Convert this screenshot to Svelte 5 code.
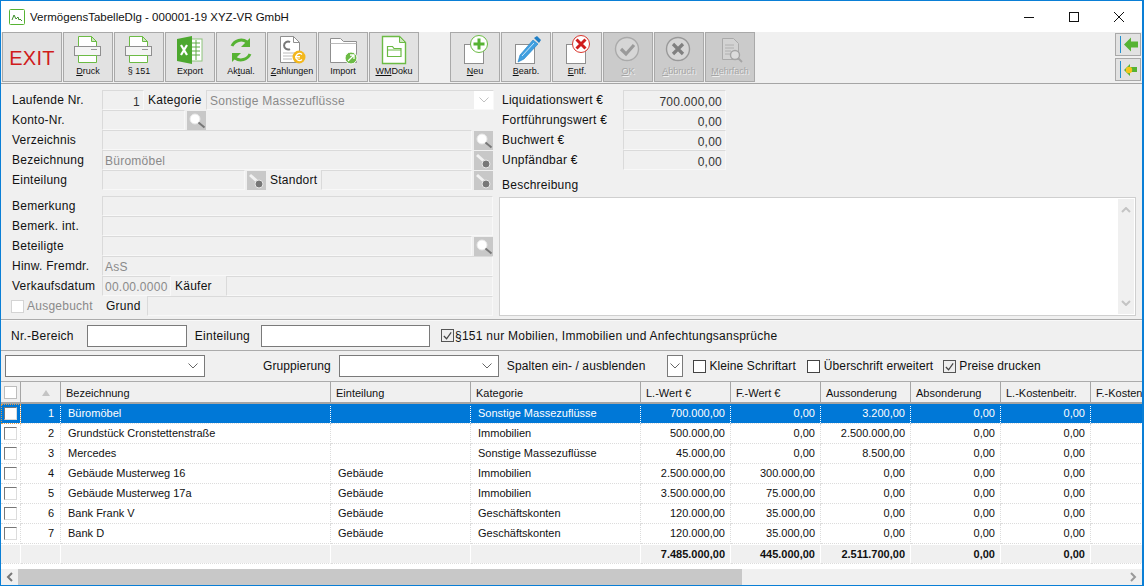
<script>
const leftTools=[{k:"print",u:"D",t:"ruck"},{k:"print",u:"",t:"§ 151"},{k:"excel",u:"",t:"Export"},{k:"sync",u:"",t:"Aktual.",mid:["Ak","t","ual."]},{k:"pay",u:"Z",t:"ahlungen"},{k:"imp",u:"",t:"Import"},{k:"wm",u:"WM",t:"Doku"}];
const rightTools=[{k:"neu",u:"N",t:"eu"},{k:"edit",u:"B",t:"earb."},{k:"del",u:"E",t:"ntf."},{k:"ok",u:"O",t:"K",off:true},{k:"abort",u:"A",t:"bbruch",off:true},{k:"multi",u:"M",t:"ehrfach",off:true}];
const cols=["Bezeichnung","Einteilung","Kategorie","L.-Wert €","F.-Wert €","Aussonderung","Absonderung","L.-Kostenbeitr.","F.-Kostenbeitr."];
const rows=[
["Büromöbel","","Sonstige Massezuflüsse","700.000,00","0,00","3.200,00","0,00","0,00"],
["Grundstück Cronstettenstraße","","Immobilien","500.000,00","0,00","2.500.000,00","0,00","0,00"],
["Mercedes","","Sonstige Massezuflüsse","45.000,00","0,00","8.500,00","0,00","0,00"],
["Gebäude Musterweg 16","Gebäude","Immobilien","2.500.000,00","300.000,00","0,00","0,00","0,00"],
["Gebäude Musterweg 17a","Gebäude","Immobilien","3.500.000,00","75.000,00","0,00","0,00","0,00"],
["Bank Frank V","Gebäude","Geschäftskonten","120.000,00","35.000,00","0,00","0,00","0,00"],
["Bank D","Gebäude","Geschäftskonten","120.000,00","35.000,00","0,00","0,00","0,00"]];
const totals=["7.485.000,00","445.000,00","2.511.700,00","0,00","0,00"];
</script>

{#snippet icon(k)}
<svg class="ico" viewBox="0 0 32 30" width="32" height="30" fill="none">
{#if k==="print"}
	<path d="M6.500 1.500h13l5 5v8h-18z" fill="#fff" stroke="#6cbb45"/><path d="M19.500 1.500v5h5z" fill="#cfe8bf" stroke="#6cbb45"/>
	<rect x="2.500" y="11.500" width="26" height="9" fill="#f4f4f4" stroke="#8f8f8f"/><path d="M19 14.500h6" stroke="#999"/>
	<path d="M6.500 20.500h18v7h-18z" fill="#fff" stroke="#6cbb45"/>
{:else if k==="excel"}
	<rect x="15" y="4" width="13" height="22" fill="#fff" stroke="#8cc47a"/><path d="M18 8h8M18 12h8M18 16h8M18 20h8M22 5v20" stroke="#5eaa45"/>
	<path d="M3 4l15-3v28l-15-3z" fill="#4da82f"/><path d="M7 10l6 10M13 10l-6 10" stroke="#fff" stroke-width="2.200"/>
{:else if k==="sync"}
	<path d="M7 11a10 10 0 0 1 15-4" stroke="#56b333" stroke-width="3"/><path d="M25 3v9h-9z" fill="#56b333"/>
	<path d="M25 19a10 10 0 0 1-15 4" stroke="#56b333" stroke-width="3"/><path d="M7 27v-9h9z" fill="#56b333"/>
{:else if k==="pay"}
	<path d="M4.500 1.500h13l6 6v20h-19z" fill="#fff" stroke="#8f8f8f"/><path d="M17.500 1.500v6h6" stroke="#8f8f8f"/>
	<path d="M14 7a4 4 0 1 0 0 7" stroke="#777" stroke-width="2"/><path d="M7 18h12M7 21h10M7 24h9" stroke="#bbb"/>
	<circle cx="23" cy="22" r="6.500" fill="#f3b71c"/><path d="M26 19.500a3.500 3.500 0 1 0 0 5M19 21.500h5M19 23h5" stroke="#fff" stroke-width="1.200"/>
{:else if k==="imp"}
	<path d="M3.500 27.500v-24h10l3 3h13v21z" fill="#fff" stroke="#8f8f8f"/><path d="M3.500 8.500h26" stroke="#bbb"/>
	<circle cx="24" cy="23" r="6" fill="#6cbb45" stroke="#fff"/><path d="M21 26l6-6M23 20h4v4" stroke="#fff" stroke-width="1.300"/>
{:else if k==="wm"}
	<path d="M4.500 1.500h17l6 6v21h-23z" fill="#fff" stroke="#6cbb45" stroke-width="1.400"/><path d="M21.500 1.500v6h6z" fill="#cfe8bf" stroke="#6cbb45"/>
	<path d="M9.500 21.500v-10h5l1.500 2h7v8z" stroke="#6cbb45" stroke-width="1.200"/><path d="M9.500 15h13.500" stroke="#6cbb45"/>
{:else if k==="neu"}
	<rect x="5.500" y="9.500" width="19" height="19" fill="#fff" stroke="#8f8f8f"/><circle cx="20" cy="9" r="8.500" fill="#fff" stroke="#6cbb45"/><path d="M20 3.500v11M14.500 9h11" stroke="#56b333" stroke-width="3"/>
{:else if k==="edit"}
	<rect x="5.500" y="9.500" width="19" height="19" fill="#fff" stroke="#8f8f8f"/><path d="M8 27l2-7L23 5l5 4-14 15z" fill="#3f9fe0" stroke="#1f7fc5" stroke-width=".6"/><path d="M12 21L24 8" stroke="#cfe8f8"/><path d="M24 3l3-2 4 4-2 3z" fill="#1f7fc5"/>
{:else if k==="del"}
	<rect x="5.500" y="9.500" width="19" height="19" fill="#fff" stroke="#8f8f8f"/><circle cx="20" cy="9" r="8.500" fill="#fff" stroke="#d9342b"/><path d="M15.500 4.500l9 9M24.500 4.500l-9 9" stroke="#d01c1c" stroke-width="3"/>
{:else if k==="ok"}
	<circle cx="15" cy="14" r="11.500" fill="#d6d6d6" stroke="#aaa" stroke-width="1.400"/><path d="M9 14l5 5 8-9" stroke="#9a9a9a" stroke-width="3.200"/>
{:else if k==="abort"}
	<circle cx="15" cy="14" r="11.500" fill="#d6d6d6" stroke="#999" stroke-width="1.400"/><path d="M10 9l10 10M20 9l-10 10" stroke="#808080" stroke-width="3.200"/>
{:else if k==="multi"}
	<path d="M8.500 3.500h11l5 5v16h-16z" fill="#d3d3d3" stroke="#aaa"/><path d="M11 10h9M11 13h9M11 16h6M11 19h6" stroke="#b0b0b0"/>
	<circle cx="21" cy="20" r="4.500" fill="#dcdcdc" stroke="#a5a5a5" stroke-width="1.400"/><path d="M24 23l4 4" stroke="#a5a5a5" stroke-width="1.800"/>
{/if}
</svg>
{/snippet}

{#snippet tool(b)}
<div class="tool" class:off={b.off}>
	{@render icon(b.k)}
	<span class="tlabel">{#if b.mid}{b.mid[0]}<u>{b.mid[1]}</u>{b.mid[2]}{:else}<u>{b.u}</u>{b.t}{/if}</span>
</div>
{/snippet}

{#snippet search()}
<span class="sqbtn"><svg viewBox="0 0 19 19" width="19" height="19" fill="none"><circle cx="8" cy="8" r="5" fill="#fff" stroke="#e8e8e8"/><path d="M11.500 11.500l6 5" stroke="#777" stroke-width="2"/></svg></span>
{/snippet}

{#snippet keyb()}
<span class="sqbtn"><svg viewBox="0 0 19 19" width="19" height="19" fill="none"><path d="M3 4l9 8" stroke="#f2f2f2" stroke-width="3"/><circle cx="12" cy="13" r="4" fill="#777" stroke="#e8e8e8"/></svg></span>
{/snippet}

{#snippet chev()}
<svg viewBox="0 0 10 6" width="10" height="6" fill="none"><path d="M.5 .5L5 5 9.500 .5" stroke="#666"/></svg>
{/snippet}

<div class="win">
	<header class="title">
		<svg class="appico" viewBox="0 0 16 16" width="16" height="16" fill="none"><rect x=".5" y=".5" width="15" height="15" rx="1" fill="#fff" stroke="#56b333"/><path d="M3 11l2-5 2 4 2-2 1 3 1-1 2 2" stroke="#3e8e2a"/></svg>
		<span class="ttext">VermögensTabelleDlg - 000001-19 XYZ-VR GmbH</span>
		<div class="wbtns">
			<svg viewBox="0 0 10 10" width="10" height="10"><path d="M0 5.500h10" stroke="#111"/></svg>
			<svg viewBox="0 0 10 10" width="10" height="10"><rect x=".5" y=".5" width="9" height="9" fill="none" stroke="#111"/></svg>
			<svg viewBox="0 0 10 10" width="10" height="10"><path d="M0 0l10 10M10 0L0 10" stroke="#111"/></svg>
		</div>
	</header>

	<div class="toolbar">
		<div class="tool exit">EXIT</div>
		{#each leftTools as b}{@render tool(b)}{/each}
		<div class="tgap"></div>
		{#each rightTools as b}{@render tool(b)}{/each}
		<div class="nav">
			<div class="navbtn"><svg viewBox="0 0 24 20" width="24" height="20" fill="none"><path d="M4.500 1v17" stroke="#1f8fd0"/><path d="M8 9.500l7-7v4h7v6h-7v4z" fill="#56b333"/></svg></div>
			<div class="navbtn"><svg viewBox="0 0 24 20" width="24" height="20" fill="none"><path d="M4.500 1v17" stroke="#1f8fd0"/><path d="M8 10l6-6v3h7v5h-7v4z" fill="#56b333"/><circle cx="13" cy="10" r="3.200" fill="#f3c51c"/></svg></div>
		</div>
	</div>

	<section class="form">
		<div class="col-l">
			<div class="row"><label>Laufende Nr.</label><span class="fld w-nr num">1</span><span class="lbl kat">Kategorie</span><span class="fld sel"><span class="seltext">Sonstige Massezuflüsse</span><span class="selarrow">{@render chev()}</span></span></div>
			<div class="row"><label>Konto-Nr.</label><span class="fld w-konto"></span>{@render search()}</div>
			<div class="row"><label>Verzeichnis</label><span class="fld grow"></span>{@render search()}</div>
			<div class="row"><label>Bezeichnung</label><span class="fld grow">Büromöbel</span>{@render keyb()}</div>
			<div class="row"><label>Einteilung</label><span class="fld w-eint"></span>{@render keyb()}<span class="lbl stand">Standort</span><span class="fld grow"></span>{@render keyb()}</div>
			<div class="row spaced"><label>Bemerkung</label><span class="fld grow"></span></div>
			<div class="row"><label>Bemerk. int.</label><span class="fld grow"></span></div>
			<div class="row"><label>Beteiligte</label><span class="fld grow"></span>{@render search()}</div>
			<div class="row"><label>Hinw. Fremdr.</label><span class="fld grow">AsS</span></div>
			<div class="row"><label>Verkaufsdatum</label><span class="fld w-date">00.00.0000</span><span class="lbl kaeufer">Käufer</span><span class="fld grow"></span></div>
			<div class="row"><span class="cb cb-form"></span><span class="lbl ausg">Ausgebucht</span><span class="lbl grund">Grund</span><span class="fld grow"></span></div>
		</div>
		<div class="col-r">
			<div class="vals">
				<div class="row"><label class="rl">Liquidationswert €</label><span class="fld w-val num">700.000,00</span></div>
				<div class="row"><label class="rl">Fortführungswert €</label><span class="fld w-val num">0,00</span></div>
				<div class="row"><label class="rl">Buchwert €</label><span class="fld w-val num">0,00</span></div>
				<div class="row"><label class="rl">Unpfändbar €</label><span class="fld w-val num">0,00</span></div>
			</div>
			<div class="beschr">Beschreibung</div>
			<div class="memo">
				<div class="vscroll">
					<svg viewBox="0 0 10 6" width="10" height="6" fill="none"><path d="M1 5l4-4 4 4" stroke="#c4c4c4" stroke-width="2"/></svg>
					<svg viewBox="0 0 10 6" width="10" height="6" fill="none"><path d="M1 1l4 4 4-4" stroke="#c4c4c4" stroke-width="2"/></svg>
				</div>
			</div>
		</div>
	</section>

	<div class="filter f1">
		<span>Nr.-Bereich</span><span class="inp w-a"></span>
		<span class="m-e">Einteilung</span><span class="inp w-b"></span>
		<span class="cb checked m-c"><svg viewBox="0 0 12 12" width="12" height="12" fill="none"><path d="M2 6l3 3 5-7" stroke="#444" stroke-width="1.300"/></svg></span>
		<span class="m-p">§151 nur Mobilien, Immobilien und Anfechtungsansprüche</span>
	</div>

	<div class="filter f2">
		<span class="inp combo w-c">{@render chev()}</span>
		<span class="m-g">Gruppierung</span>
		<span class="inp combo w-d">{@render chev()}</span>
		<span class="m-s">Spalten ein- / ausblenden</span>
		<span class="inp combo w-x">{@render chev()}</span>
		<span class="cb blk m-k"></span><span class="m-l">Kleine Schriftart</span>
		<span class="cb blk m-u"></span><span class="m-l2">Überschrift erweitert</span>
		<span class="cb checked m-r"><svg viewBox="0 0 12 12" width="12" height="12" fill="none"><path d="M2 6l3 3 5-7" stroke="#444" stroke-width="1.300"/></svg></span><span class="m-l">Preise drucken</span>
	</div>

	<div class="grid">
		<table>
			<colgroup><col class="c0"><col class="c1"><col class="c2"><col class="c3"><col class="c4">{#each [0,1,2,3,4,5] as c}<col class="cn">{/each}</colgroup>
			<thead>
				<tr>
					<th><span class="cb hcb"></span></th>
					<th class="sort"><svg viewBox="0 0 8 6" width="8" height="6"><path d="M0 6l4-6 4 6z" fill="#c4c4c4"/></svg></th>
					{#each cols as c}<th>{c}</th>{/each}
				</tr>
			</thead>
			<tbody>
				{#each rows as r,i}
				<tr class:sel-row={i===0}>
					<td class="chk"><span class="cb rcb"></span></td>
					<td class="r">{i+1}</td>
					<td>{r[0]}</td><td>{r[1]}</td><td>{r[2]}</td>
					{#each r.slice(3) as v}<td class="r v">{v}</td>{/each}
					<td></td>
				</tr>
				{/each}
				<tr class="sum">
					<td></td><td></td><td></td><td></td><td></td>
					{#each totals as v}<td class="r v">{v}</td>{/each}
					<td></td>
				</tr>
			</tbody>
		</table>
	</div>

	<div class="hscroll">
		<span class="harrow"><svg viewBox="0 0 8 10" width="8" height="10" fill="none"><path d="M6 1L2 5l4 4" stroke="#777" stroke-width="2"/></svg></span>
		<span class="thumb"></span>
		<span class="harrow end"><svg viewBox="0 0 8 10" width="8" height="10" fill="none"><path d="M2 1l4 4-4 4" stroke="#999" stroke-width="2"/></svg></span>
	</div>
</div>

<style>
:global(body){margin:0;background:#fff}
.win{box-sizing:border-box;width:1144px;height:586px;border:1px solid #0a7fd6;border-right-width:2px;display:flex;flex-direction:column;overflow:hidden;font:12px "Liberation Sans",Arial,sans-serif;letter-spacing:.25px;color:#111;background:#f0f0f0}

.title{height:31px;flex:none;background:#fff;display:flex;align-items:center;padding-left:8px}
.appico{margin-right:5px}
.ttext{font-size:11.500px;letter-spacing:0}
.wbtns{margin-left:auto;display:flex;gap:35px;padding-right:18px}

.toolbar{height:50px;flex:none;display:flex;gap:1px;padding-left:1px;border-bottom:1px solid #f0f0f0;box-shadow:0 1px 0 #a5a5a5}
.tool{box-sizing:border-box;width:50px;height:50px;background:#e2e2e2;border:1px solid #a9a9a9;display:flex;flex-direction:column;align-items:center;overflow:hidden}
.tool.off{background:#cbcbcb}
.ico{flex:none;margin-top:2px}
.tlabel{font-size:9px;letter-spacing:0;line-height:12px;white-space:nowrap}
.off .tlabel{color:#a5a5a5;text-shadow:1px 1px 0 #eee}
.exit{width:60px;justify-content:center;color:#d01c1c;font-size:20px;letter-spacing:.3px;padding-top:2px}
.tgap{width:29px}
.nav{margin-left:auto;display:flex;flex-direction:column;gap:2px;padding:1px 1px 0 0}
.navbtn{box-sizing:border-box;width:26px;height:23px;background:#e2e2e2;border:1px solid #a9a9a9;display:flex;align-items:center;justify-content:center}

.form{height:236px;flex:none;margin-top:1px;box-sizing:border-box;padding:6px 5px 0 0;display:flex;border-bottom:1px solid #ababab}
.col-l{box-sizing:border-box;width:492px;padding-left:10px;flex:none}
.col-r{flex:1;display:flex;flex-direction:column;padding-left:6px}
.row{display:flex;align-items:center;height:20px;gap:2px;white-space:nowrap}
.row.spaced{margin-top:6px}
label{box-sizing:border-box;width:89px;padding:0 0 1px 1px;flex:none}
.lbl{flex:none}
.fld{box-sizing:border-box;height:20px;border:1px solid #dadada;border-right-color:#f8f8f8;border-bottom-color:#f8f8f8;background:#f0f0f0;color:#8a8a8a;padding:3px 2px 0;line-height:15px;overflow:hidden;flex:none}
.grow{flex:1;min-width:0}
.num{text-align:right;color:#333;padding-right:3px;padding-top:4px}
.w-nr{width:42px}
.w-konto{width:83px}
.w-eint{width:143px}
.w-date{width:69px}
.w-val{width:103px}
.kat{box-sizing:border-box;width:58px;padding-left:2px}
.stand{box-sizing:border-box;width:51px;padding-left:2px}
.kaeufer{box-sizing:border-box;width:51px;padding-left:2px}
.sel{width:288px;display:flex;justify-content:space-between;padding:0}
.seltext{padding:3px 4px 0 3px}
.selarrow{width:19px;background:#fff;display:flex;align-items:center;justify-content:center}
.selarrow svg{opacity:.4}
.sqbtn{width:19px;height:19px;background:#c8c8c8;flex:none;display:block}
.sqbtn svg{display:block}
.cb{box-sizing:border-box;display:inline-flex;width:13px;height:13px;flex:none;border:1px solid #7a7a7a;background:#fff}
.cb-form{border-color:#d4d4d4;margin-right:1px}
.ausg{color:#8a8a8a;width:77px}
.grund{width:39px}
.rl{width:119px;margin-left:-2px;padding-left:0}
.vals{height:85px}
.vals .row{margin-left:5px}
.beschr{height:19px;padding:3px 0 0 3px;line-height:15px}
.memo{box-sizing:border-box;flex:1;width:637px;margin-bottom:3px;background:#fff;border:1px solid #cfcfcf;display:flex;justify-content:flex-end;padding:1px 1px 1px 0}
.vscroll{width:16px;background:#f0f0f0;display:flex;flex-direction:column;justify-content:space-between;align-items:center;padding:8px 0;box-sizing:border-box}

.filter{display:flex;align-items:center;flex:none;box-sizing:border-box;border-bottom:1px solid #ababab;white-space:nowrap}
.f1{height:31px;padding-left:10px;border-top:1px solid #f8f8f8}
.f2{height:31px;padding-left:4px;letter-spacing:.1px}
.inp{box-sizing:border-box;height:22px;border:1px solid #7a7a7a;background:#fff;flex:none}
.combo{display:flex;align-items:center;justify-content:flex-end;padding-right:6px}
.w-a{width:100px;margin-left:13px}
.m-e{margin-left:8px}
.w-b{width:169px;margin-left:11px}
.m-c{margin-left:11px}
.m-p{margin-left:1px}
.w-c{width:200px}
.m-g{margin-left:58px}
.w-d{width:160px;margin-left:8px}
.m-s{margin-left:8px}
.w-x{width:16px;margin-left:22px;padding:0 2px}
.blk{border-color:#444}
.m-k{margin-left:10px}
.m-l{margin-left:3px}
.m-l2{margin-left:4px}
.m-u{margin-left:11px}
.m-r{margin-left:10px}
.checked{background:#eee;border-color:#555}

.grid{flex:1;min-height:0;overflow:hidden;background:#fff}
table{table-layout:fixed;border-collapse:separate;border-spacing:0;width:1180px;font-size:11px;letter-spacing:0}
.c0{width:20px}
.c1{width:40px}
.c2{width:270px}
.c3{width:140px}
.c4{width:170px}
.cn{width:90px}
th{box-sizing:border-box;height:22px;background:#f0f0f0;font-weight:400;text-align:left;padding:1px 0 0 5px;border-right:1px solid #a5a5a5;border-bottom:2px solid #a5a5a5;white-space:nowrap;overflow:hidden}
th:first-child{padding-left:3px;padding-top:0}
.sort{text-align:right;padding:0 10px 0 0}
td{box-sizing:border-box;height:20px;padding:0 0 0 7px;border-right:1px dotted #dcdcdc;border-bottom:1px dotted #dcdcdc;white-space:nowrap;overflow:hidden;line-height:15px}
td.r{text-align:right;padding:0 6px 0 0}
td.v{padding-right:5px}
td.chk{padding:0 0 0 3px;line-height:0}
.hcb{border-color:#bdbdbd;display:block}
.rcb{border-color:#777 #dcdcdc #dcdcdc #777;display:block}
.sel-row td{background:#0078d7;background-clip:padding-box;color:#fff;border-right-color:#0078d7;border-bottom-color:#dcdcdc}
.sel-row td.chk{outline:1px dotted #e09a4a;outline-offset:-1px}
.sum td{background:#f0f0f0;background-clip:padding-box;font-weight:700;border-right:1px solid #fff;border-top:1px solid #fff}

.hscroll{height:16px;flex:none;display:flex;background:#f0f0f0}
.harrow{width:17px;display:flex;align-items:center;justify-content:center}
.harrow.end{margin-left:auto;width:18px}
.thumb{width:724px;background:#c8c8c8}
</style>
